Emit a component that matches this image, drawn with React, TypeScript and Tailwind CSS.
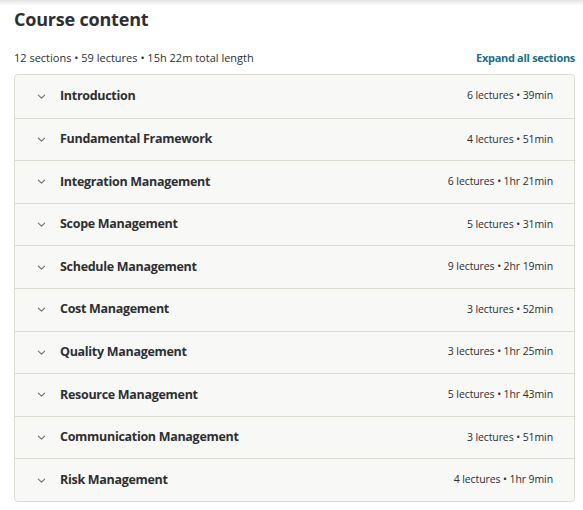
const sections = [
  { title: 'Introduction', meta: '6 lectures • 39min' },
  { title: 'Fundamental Framework', meta: '4 lectures • 51min' },
  { title: 'Integration Management', meta: '6 lectures • 1hr 21min' },
  { title: 'Scope Management', meta: '5 lectures • 31min' },
  { title: 'Schedule Management', meta: '9 lectures • 2hr 19min' },
  { title: 'Cost Management', meta: '3 lectures • 52min' },
  { title: 'Quality Management', meta: '3 lectures • 1hr 25min' },
  { title: 'Resource Management', meta: '5 lectures • 1hr 43min' },
  { title: 'Communication Management', meta: '3 lectures • 51min' },
  { title: 'Risk Management', meta: '4 lectures • 1hr 9min' },
];

const Chevron = () => (
  <svg className="w-[9px] h-[9px] text-[#6a6f73]" viewBox="0 0 10 10" fill="none" stroke="currentColor">
    <path d="M1.5 3.5L5 6.8l3.5-3.3" strokeWidth={1.2} strokeLinecap="round" strokeLinejoin="round" />
  </svg>
);

const App = () => {
  return (
    <div className="w-[583px] h-[510px] bg-white text-[#2d2f31] font-['Open_Sans',sans-serif] overflow-hidden">
      <div className="h-[6px] bg-gradient-to-b from-[#e4e4e4] to-white" />
      <div className="px-[14px]">
        <h2 className="text-[18px] leading-[26px] font-bold tracking-[-0.2px]">Course content</h2>
        <div className="flex items-center justify-between mt-[18px] text-[11px] leading-[16px]">
          <span>12 sections • 59 lectures • 15h 22m total length</span>
          <button className="font-bold text-[#1c6f86] tracking-[-0.3px] -mr-[6px]">Expand all sections</button>
        </div>
        <div className="mt-[8px] w-[561px] border border-[#dcdcd2] rounded-[4px] bg-[#f8f8f6]">
          {sections.map((s, i) => (
            <div
              key={i}
              className={`flex items-center h-[42.6px] pl-[22px] pr-[21px] ${i > 0 ? 'border-t border-[#dcdcd2]' : ''}`}
            >
              <Chevron />
              <span className="ml-[14px] text-[12.5px] font-bold tracking-[-0.3px]">{s.title}</span>
              <span className="ml-auto text-[10.5px] tracking-[-0.1px]">{s.meta}</span>
            </div>
          ))}
        </div>
      </div>
    </div>
  );
};

export default App;
